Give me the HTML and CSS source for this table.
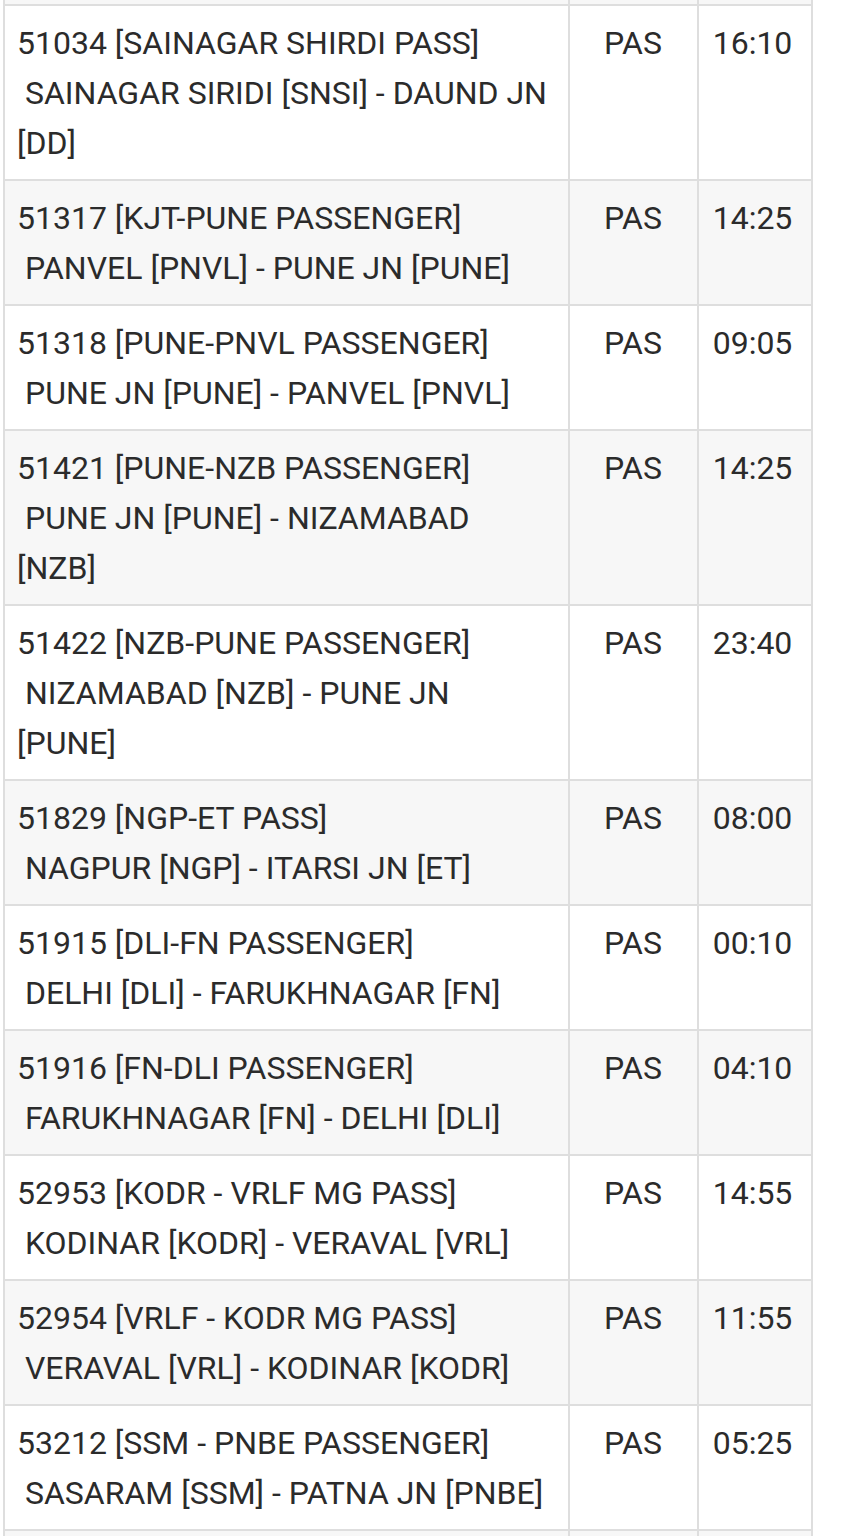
FILE: index.html
```html
<!DOCTYPE html>
<html>
<head>
<meta charset="utf-8">
<link rel="stylesheet" href="styles.css">
</head>
<body>
<table class="trains">
  <colgroup>
    <col class="c-name">
    <col class="c-type">
    <col class="c-time">
  </colgroup>
  <tbody>
    <tr class="sliver odd"><td></td><td></td><td></td></tr>
    <tr><td class="name">51034 [SAINAGAR SHIRDI PASS]<br>&nbsp;SAINAGAR SIRIDI [SNSI] - DAUND JN [DD]</td><td class="type">PAS</td><td class="time">16:10</td></tr>
    <tr class="odd"><td class="name">51317 [KJT-PUNE PASSENGER]<br>&nbsp;PANVEL [PNVL] - PUNE JN [PUNE]</td><td class="type">PAS</td><td class="time">14:25</td></tr>
    <tr><td class="name">51318 [PUNE-PNVL PASSENGER]<br>&nbsp;PUNE JN [PUNE] - PANVEL [PNVL]</td><td class="type">PAS</td><td class="time">09:05</td></tr>
    <tr class="odd"><td class="name">51421 [PUNE-NZB PASSENGER]<br>&nbsp;PUNE JN [PUNE] - NIZAMABAD [NZB]</td><td class="type">PAS</td><td class="time">14:25</td></tr>
    <tr><td class="name">51422 [NZB-PUNE PASSENGER]<br>&nbsp;NIZAMABAD [NZB] - PUNE JN [PUNE]</td><td class="type">PAS</td><td class="time">23:40</td></tr>
    <tr class="odd"><td class="name">51829 [NGP-ET PASS]<br>&nbsp;NAGPUR [NGP] - ITARSI JN [ET]</td><td class="type">PAS</td><td class="time">08:00</td></tr>
    <tr><td class="name">51915 [DLI-FN PASSENGER]<br>&nbsp;DELHI [DLI] - FARUKHNAGAR [FN]</td><td class="type">PAS</td><td class="time">00:10</td></tr>
    <tr class="odd"><td class="name">51916 [FN-DLI PASSENGER]<br>&nbsp;FARUKHNAGAR [FN] - DELHI [DLI]</td><td class="type">PAS</td><td class="time">04:10</td></tr>
    <tr><td class="name">52953 [KODR - VRLF MG PASS]<br>&nbsp;KODINAR [KODR] - VERAVAL [VRL]</td><td class="type">PAS</td><td class="time">14:55</td></tr>
    <tr class="odd"><td class="name">52954 [VRLF - KODR MG PASS]<br>&nbsp;VERAVAL [VRL] - KODINAR [KODR]</td><td class="type">PAS</td><td class="time">11:55</td></tr>
    <tr><td class="name">53212 [SSM - PNBE PASSENGER]<br>&nbsp;SASARAM [SSM] - PATNA JN [PNBE]</td><td class="type">PAS</td><td class="time">05:25</td></tr>
    <tr class="odd"><td class="name"></td><td class="type"></td><td class="time"></td></tr>
  </tbody>
</table>
</body>
</html>
```

FILE: styles.css
```css
html, body {
  margin: 0;
  padding: 0;
  background: #ffffff;
}

body {
  font-family: Roboto, "Liberation Sans", sans-serif;
  color: #2b2b2b;
  overflow: hidden;
}

.trains {
  border-collapse: collapse;
  table-layout: fixed;
  width: 808px;
  margin-left: 3px;
  font-size: 32px;
  line-height: 50px;
}

.c-name { width: 565px; }
.c-type { width: 129px; }
.c-time { width: 114px; }

.trains td {
  border: 2px solid #dedede;
  padding: 12px 14px 11px 12px;
  vertical-align: top;
  background: #ffffff;
}

.trains tr.odd td {
  background: #f7f7f7;
}

.trains td.name {
  text-align: left;
}

.trains td.type {
  text-align: center;
  padding-left: 0;
  padding-right: 1px;
}

.trains td.time {
  text-align: center;
  padding-left: 0;
  padding-right: 5px;
}

.trains tr.sliver td {
  height: 4px;
  padding: 0;
  border-top: 0;
}
```
